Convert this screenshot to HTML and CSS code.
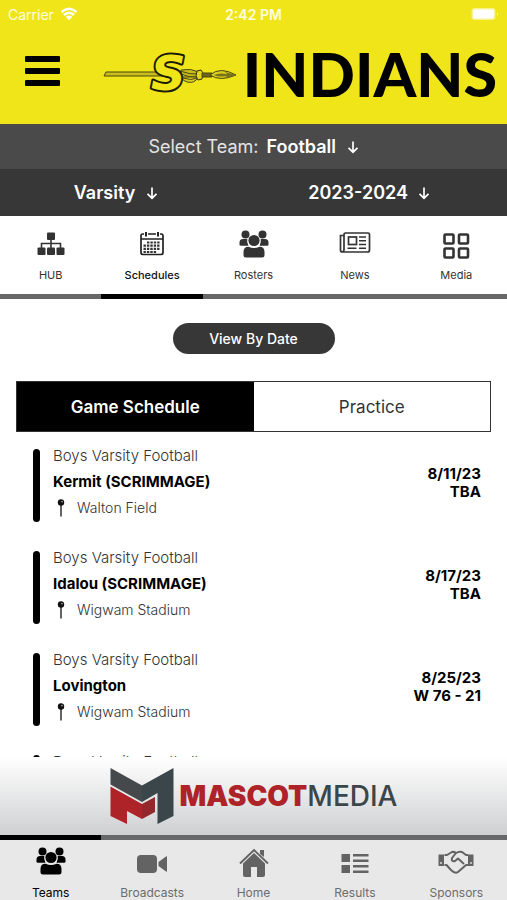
FILE: index.html
```html
<!DOCTYPE html>
<html lang="en">
<head>
    <meta charset="UTF-8">
    <meta name="viewport" content="width=device-width, initial-scale=1.0">
    <title>Indians - Schedules</title>
    <link rel="stylesheet" href="styles.css">
</head>
<body>
    <!-- Shared icons -->
    <svg class="sprite" aria-hidden="true">
        <symbol id="arrow" viewBox="0 0 12 14">
            <path d="M6 1.500V12M1.500 7.800L6 12.200L10.500 7.800" fill="none" stroke="currentColor" stroke-width="1.700"/>
        </symbol>
        <symbol id="group" viewBox="0 0 30 28">
            <g fill="currentColor">
                <circle cx="6.500" cy="4.500" r="4"/>
                <circle cx="23.500" cy="4.500" r="4"/>
                <path d="M0.500 15V12.500Q0.500 9 4 9H8.300Q7.500 12.500 9.500 15.800H3Q0.500 16 0.500 15Z"/>
                <path d="M29.500 15V12.500Q29.500 9 26 9H21.700Q22.500 12.500 20.500 15.800H27Q29.500 16 29.500 15Z"/>
                <circle cx="15" cy="10.500" r="5.600"/>
                <path d="M4.500 25V22Q4.500 16.700 9.500 16.700Q15 19.500 20.500 16.700Q25.500 16.700 25.500 22V25Q25.500 27.500 23 27.500H7Q4.500 27.500 4.500 25Z"/>
            </g>
        </symbol>
        <symbol id="pin" viewBox="0 0 10 18">
            <path d="M5 5V17.500" stroke="#222" stroke-width="1.400"/>
            <circle cx="5" cy="3.500" r="3.200" fill="#111"/>
            <circle cx="6" cy="2.600" r="0.900" fill="#999"/>
        </symbol>
    </svg>

    <header class="header">
        <div class="status">
            <div class="carrier">
                <span>Carrier</span>
                <svg width="18" height="14" viewBox="0 0 18 14">
                    <path d="M1.500 5Q9 -1.500 16.500 5M4 8Q9 3.500 14 8" fill="none" stroke="#fff" stroke-width="2.400"/>
                    <path d="M5.800 9.800Q9 7.200 12.200 9.800L9 13.200Z" fill="#fff"/>
                </svg>
            </div>
            <div class="time">2:42 PM</div>
            <div class="power">
                <svg width="28" height="14" viewBox="0 0 28 14">
                    <rect x="0.500" y="1" width="24" height="12" rx="3" fill="#fff" opacity="0.500"/>
                    <rect x="2" y="2.500" width="21" height="9" rx="2" fill="#fff"/>
                    <path d="M26 5Q28 7 26 9Z" fill="#fff" opacity="0.600"/>
                </svg>
            </div>
        </div>
        <div class="brand">
            <button class="menu" type="button" aria-label="Menu"><span></span><span></span><span></span></button>
            <svg class="spear" width="134" height="60" viewBox="0 -6 134 60">
                <path d="M3 22H60V26H1Z" fill="#c9bd1c" stroke="#4b4810" stroke-width="1"/>
                <path d="M78 20Q88 18 96 22V27Q86 28 78 24Z" fill="#c9bd1c" stroke="#4b4810"/>
                <path d="M78 27Q88 27 95 27Q92 34 84 32Q80 31 78 27Z" fill="#d8cc1c" stroke="#4b4810"/>
                <path d="M77 21Q87 25 97 24M80 28Q88 31 94 28" fill="none" stroke="#4b4810"/>
                <path d="M94 21L98 20L100 23L99 29L95 30L93 26Z" fill="#e4d81b" stroke="#333108"/>
                <path d="M99 23H109V27H99Z" fill="#6b661a" stroke="#4b4810"/>
                <path d="M107 25Q117 16 133 25Q117 32 107 25Z" fill="#d8cc1c" stroke="#4b4810"/>
                <path d="M111 25Q118 22 127 25Q118 28 111 25ZM122 22L133 25L122 28L125 25Z" fill="#77711a"/>
                <text class="spear-letter" x="48" y="40">S</text>
            </svg>
            <h1 class="wordmark">INDIANS</h1>
        </div>
    </header>

    <div class="filters">
        <div class="filter-row team-row">
            <label class="picker">
                <span class="picker-label">Select Team:</span>
                <select><option>Football</option></select>
                <svg width="12" height="14"><use href="#arrow"/></svg>
            </label>
        </div>
        <div class="filter-row split-row">
            <label class="picker">
                <select aria-label="Level"><option>Varsity</option></select>
                <svg width="12" height="14"><use href="#arrow"/></svg>
            </label>
            <label class="picker">
                <select aria-label="Season"><option>2023-2024</option></select>
                <svg width="12" height="14"><use href="#arrow"/></svg>
            </label>
        </div>
    </div>

    <nav class="tabs top-tabs">
        <a href="#">
            <svg width="28" height="28" viewBox="0 0 28 28">
                <g fill="#333">
                    <rect x="10" y="2.500" width="8" height="7.500" rx="1"/>
                    <rect x="0.500" y="17.500" width="8" height="7.500" rx="1"/>
                    <rect x="10" y="17.500" width="8" height="7.500" rx="1"/>
                    <rect x="19.500" y="17.500" width="8" height="7.500" rx="1"/>
                </g>
                <path d="M14 9V18M4.500 18V13.500H23.500V18" fill="none" stroke="#333" stroke-width="1.600"/>
            </svg>
            <span>HUB</span>
        </a>
        <a href="#" class="active">
            <svg width="28" height="28" viewBox="0 0 28 28">
                <path d="M6 4H4.500Q3 4 3 6V22.500Q3 24.500 5 24.500H23Q25 24.500 25 22.500V6Q25 4 23.500 4H22M10 4H18M3 9H25" fill="none" stroke="#222" stroke-width="1.700"/>
                <path d="M8 2V6.500M20 2V6.500" stroke="#222" stroke-width="2"/>
                <path d="M9 12.500H22.500M5.500 15.700H22.500M5.500 18.900H22.500M5.500 22H19" stroke="#333" stroke-width="2.200" stroke-dasharray="2.400 1"/>
            </svg>
            <span>Schedules</span>
        </a>
        <a href="#">
            <svg width="30" height="28"><use href="#group"/></svg>
            <span>Rosters</span>
        </a>
        <a href="#">
            <svg width="32" height="28" viewBox="0 0 32 28">
                <path d="M5 20V4.500Q5 3 6.500 3H29Q30.500 3 30.500 4.500V20Q30.500 22 28.500 22H3.500Q1.500 22 1.500 20V5.500H5M5 19Q5 22 3.300 22" fill="none" stroke="#333" stroke-width="1.700"/>
                <rect x="9.500" y="7" width="8" height="7.500" fill="none" stroke="#333" stroke-width="1.700"/>
                <path d="M20 7H27M20 10.800H27M20 14.500H27M8.500 18.300H17.500M20 18.300H27" stroke="#333" stroke-width="1.600"/>
            </svg>
            <span>News</span>
        </a>
        <a href="#">
            <svg width="28" height="28" viewBox="0 0 28 28">
                <g fill="none" stroke="#333" stroke-width="2.600">
                    <rect x="2.500" y="4.500" width="9" height="9" rx="1"/>
                    <rect x="17" y="4.500" width="9" height="9" rx="1"/>
                    <rect x="2.500" y="18.500" width="9" height="9" rx="1"/>
                    <rect x="17" y="18.500" width="9" height="9" rx="1"/>
                </g>
            </svg>
            <span>Media</span>
        </a>
    </nav>

    <main class="content">
        <button class="view-date" type="button">View By Date</button>
        <div class="switch">
            <button class="active" type="button">Game Schedule</button>
            <button type="button">Practice</button>
        </div>
        <div class="games">
            <article class="game">
                <div class="info">
                    <p class="sport">Boys Varsity Football</p>
                    <h2>Kermit (SCRIMMAGE)</h2>
                    <p class="place"><svg width="10" height="18"><use href="#pin"/></svg>Walton Field</p>
                </div>
                <p class="result">8/11/23<br>TBA</p>
            </article>
            <article class="game">
                <div class="info">
                    <p class="sport">Boys Varsity Football</p>
                    <h2>Idalou (SCRIMMAGE)</h2>
                    <p class="place"><svg width="10" height="18"><use href="#pin"/></svg>Wigwam Stadium</p>
                </div>
                <p class="result">8/17/23<br>TBA</p>
            </article>
            <article class="game">
                <div class="info">
                    <p class="sport">Boys Varsity Football</p>
                    <h2>Lovington</h2>
                    <p class="place"><svg width="10" height="18"><use href="#pin"/></svg>Wigwam Stadium</p>
                </div>
                <p class="result">8/25/23<br>W 76 - 21</p>
            </article>
            <article class="game">
                <div class="info">
                    <p class="sport">Boys Varsity Football</p>
                </div>
            </article>
        </div>
    </main>

    <!-- Sponsor banner -->
    <div class="sponsor">
        <svg width="64" height="58" viewBox="0 0 64 58">
            <path d="M0.500 1L32 18.500V35L0.500 17.500Z" fill="#46494c"/>
            <path d="M32 18.500L63.500 1V49L47.500 57V26L32 35Z" fill="#3b464a"/>
            <path d="M0.500 19.500L32 37V52L17 44V57L0.500 49Z" fill="#ae2328"/>
            <path d="M32 37L45 30V45L32 52Z" fill="#93272b"/>
        </svg>
        <div class="sponsor-name"><b>MASCOT</b><span>MEDIA</span></div>
    </div>

    <nav class="tabs bottom-tabs">
        <a href="#" class="active">
            <svg width="30" height="28"><use href="#group"/></svg>
            <span>Teams</span>
        </a>
        <a href="#">
            <svg width="32" height="28" viewBox="0 0 32 28">
                <rect x="1" y="8" width="20" height="18" rx="4" fill="#636363"/>
                <path d="M22.500 15L30 9.500Q31 9 31 10V24Q31 25 30 24.500L22.500 19Z" fill="#636363"/>
            </svg>
            <span>Broadcasts</span>
        </a>
        <a href="#">
            <svg width="30" height="28" viewBox="0 0 30 28">
                <path d="M1 16.500L15 3L29 16.500" fill="none" stroke="#636363" stroke-width="1.900"/>
                <path d="M21 3H25V10L21 7Z" fill="#636363"/>
                <path d="M4 16.500L15 6L26 16.500V28Q26 30 24 30H18V20H12V30H6Q4 30 4 28Z" fill="#636363"/>
            </svg>
            <span>Home</span>
        </a>
        <a href="#">
            <svg width="28" height="28" viewBox="0 0 28 28">
                <path d="M0.500 7H9V15H0.500ZM0.500 18H9V26H0.500ZM12 7H27.500V9.500H12ZM12 12.500H27.500V15H12ZM12 18H27.500V20.500H12ZM12 23.500H27.500V26H12Z" fill="#636363"/>
            </svg>
            <span>Results</span>
        </a>
        <a href="#">
            <svg width="36" height="28" viewBox="0 0 36 28">
                <path d="M0.500 7.500H6V19H0.500ZM30 7.500H35.500V19H30Z" fill="#636363"/>
                <path d="M6.500 8H9L14 5Q16 4.500 18 6Q21 4 24 5L28 8H30M6.500 18H8.500L13 23Q17 27 20 25L28 18H30M18 6L14 11Q13 15 17 14L20 11.500L26 17" fill="none" stroke="#636363" stroke-width="2" stroke-linejoin="round"/>
                <circle cx="3" cy="16" r="0.900" fill="#e8e8e8"/>
                <circle cx="33" cy="16" r="0.900" fill="#e8e8e8"/>
            </svg>
            <span>Sponsors</span>
        </a>
    </nav>
</body>
</html>
```
FILE: styles.css
```css
* {
    margin: 0;
    padding: 0;
    box-sizing: border-box;
}

body {
    height: 100vh;
    display: flex;
    flex-direction: column;
    overflow: hidden;
    background: #fff;
    color: #333;
    font-family: Inter, "Liberation Sans", sans-serif;
}

button, select {
    font: inherit;
    color: inherit;
    border: none;
    background: none;
    cursor: pointer;
}

a {
    color: inherit;
    text-decoration: none;
}

svg {
    display: block;
    flex: none;
    overflow: visible;
}

.sprite {
    position: absolute;
    width: 0;
    height: 0;
}

/* Header */
.header {
    background: #f0e518;
    color: #000;
}

.status {
    display: flex;
    align-items: center;
    height: 28px;
    padding: 0 8px;
    color: #fffde0;
    font-size: 14px;
}

.status > div {
    flex: 1;
}

.carrier {
    display: flex;
    align-items: center;
    gap: 6px;
}

.time {
    text-align: center;
    font-weight: 600;
}

.power {
    display: flex;
    justify-content: flex-end;
}

.brand {
    display: flex;
    align-items: center;
    height: 96px;
    padding: 0 10px 4px 25px;
}

.menu {
    display: flex;
    flex-direction: column;
    gap: 6px;
    width: 35px;
    margin-top: -6px;
}

.menu span {
    height: 6px;
    border-radius: 1px;
    background: #000;
}

.spear {
    margin-left: auto;
}

.spear-letter {
    font-family: "DejaVu Sans", sans-serif;
    font-size: 48px;
    font-weight: 700;
    font-style: italic;
    fill: #f0e518;
    stroke: #1c1b08;
    stroke-width: 4px;
    stroke-linejoin: round;
    paint-order: stroke;
}

.wordmark {
    margin-left: 6px;
    font-family: Lato, sans-serif;
    font-size: 61px;
    font-weight: 900;
    line-height: 64px;
}

/* Team, level and season pickers */
.filters {
    background: #373737;
    color: #fff;
    font-size: 18px;
}

.filter-row {
    display: flex;
    height: 47px;
}

.team-row {
    height: 45px;
    background: #4b4a4a;
}

.split-row .picker {
    padding-right: 22px;
}

.picker {
    flex: 1;
    display: flex;
    align-items: center;
    justify-content: center;
    gap: 10px;
}

.picker-label {
    margin-right: -2px;
    color: #e4e4e4;
}

.picker select {
    appearance: none;
    font-weight: 600;
}

/* Tab bars */
.tabs {
    display: flex;
    font-size: 12px;
}

.tabs a {
    flex: 1;
    display: flex;
    flex-direction: column;
    align-items: center;
}

.top-tabs a {
    height: 83px;
    padding-top: 14px;
    gap: 10px;
    border-bottom: 5px solid #686868;
    font-size: 11px;
}

.top-tabs .active {
    color: #111;
    font-weight: 500;
    border-color: #000;
}

/* Schedule */
.content {
    flex: 1;
    min-height: 0;
    overflow: hidden;
    display: flex;
    flex-direction: column;
    padding: 24px 16px 0;
}

.view-date {
    flex: none;
    align-self: center;
    width: 162px;
    height: 31px;
    border-radius: 16px;
    background: #373737;
    color: #fff;
    font-size: 14px;
    font-weight: 500;
}

.switch {
    flex: none;
    display: flex;
    height: 51px;
    margin-top: 27px;
    border: 1px solid #333;
    font-size: 17px;
}

.switch button {
    flex: 1;
}

.switch .active {
    background: #000;
    color: #fff;
    font-weight: 600;
}

.games {
    display: flex;
    flex-direction: column;
    gap: 29px;
    padding: 17px 10px 0 17px;
}

.game {
    flex: none;
    display: flex;
    justify-content: space-between;
    height: 73px;
}

.game::before {
    content: '';
    width: 7px;
    margin-right: 13px;
    border-radius: 4px;
    background: #000;
}

.info {
    flex: 1;
    margin-top: -6px;
    line-height: 26px;
}

.sport {
    font-size: 15px;
    font-weight: 300;
}

.game h2 {
    color: #000;
    font-size: 15px;
    font-weight: 700;
    line-height: 26px;
}

.place {
    display: flex;
    align-items: center;
    gap: 11px;
    padding-left: 3px;
    font-size: 14px;
    font-weight: 300;
}

.result {
    padding-top: 16px;
    color: #000;
    font-size: 15px;
    font-weight: 700;
    line-height: 18px;
    text-align: right;
}

/* Sponsor banner */
.sponsor {
    display: flex;
    align-items: center;
    justify-content: center;
    gap: 6px;
    height: 78px;
    background: linear-gradient(#fff, #cfd0d2);
}

.sponsor-name {
    display: flex;
    color: #3b464a;
    font-size: 28px;
}

.sponsor-name b {
    color: #ae2328;
    font-weight: 900;
}

.sponsor-name span {
    font-weight: 500;
}

.bottom-tabs {
    background: #e8e8e8;
    color: #6c6c6c;
}

.bottom-tabs a {
    height: 65px;
    padding-top: 7px;
    gap: 10px;
    border-top: 5px solid #686868;
}

.bottom-tabs .active {
    color: #000;
    border-color: #000;
}
```
